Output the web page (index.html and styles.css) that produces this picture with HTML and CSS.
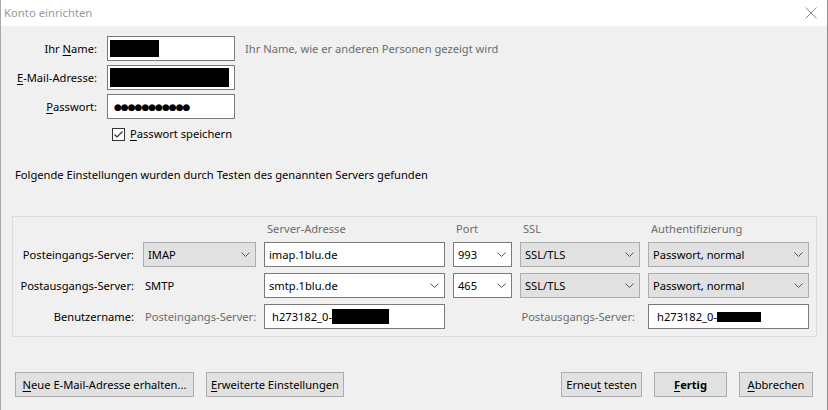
FILE: index.html
```html
<!DOCTYPE html>
<html lang="de">
<head>
    <meta charset="utf-8">
    <title>Konto einrichten</title>
    <link rel="stylesheet" href="styles.css">
</head>
<body>

    <div class="dialog">

        <div class="titlebar">
            <span class="titlebar__title">Konto einrichten</span>
            <svg class="titlebar__close" width="12" height="12" viewBox="0 0 12 12">
                <path d="M0.5 0.5 L11.5 11.5 M11.5 0.5 L0.5 11.5" stroke="#8a8a8a" stroke-width="1" fill="none"/>
            </svg>
        </div>

        <div class="account">
            <span class="account__label">Ihr <u>N</u>ame:</span>
            <div class="field field--account"><span class="redacted redacted--name"></span></div>
            <span class="account__hint">Ihr Name, wie er anderen Personen gezeigt wird</span>

            <span class="account__label"><u>E</u>-Mail-Adresse:</span>
            <div class="field field--account"><span class="redacted redacted--mail"></span></div>
            <span></span>

            <span class="account__label"><u>P</u>asswort:</span>
            <div class="field field--account"><span class="account__dots">●●●●●●●●●●●</span></div>
            <span></span>

            <span></span>
            <label class="check">
                <svg class="check__box" width="13" height="13" viewBox="0 0 13 13">
                    <rect x="0.5" y="0.5" width="12" height="12" fill="#fff" stroke="#333"/>
                    <path d="M2.5 6.5 L5 9 L10.5 3.5" stroke="#333" stroke-width="1.2" fill="none"/>
                </svg>
                <span><u>P</u>asswort speichern</span>
            </label>
        </div>

        <p class="notice">Folgende Einstellungen wurden durch Testen des genannten Servers gefunden</p>

        <div class="servers">
            <div class="servers__grid">
                <span></span>
                <span></span>
                <span class="servers__head">Server-Adresse</span>
                <span class="servers__head">Port</span>
                <span class="servers__head">SSL</span>
                <span class="servers__head">Authentifizierung</span>

                <span class="servers__label">Posteingangs-Server:</span>
                <div class="field field--select">IMAP<svg class="chevron" width="9" height="5" viewBox="0 0 9 5"><path d="M0.5 0.5 L4.5 4.5 L8.5 0.5" stroke="#555" fill="none"/></svg></div>
                <div class="field">imap.1blu.de</div>
                <div class="field">993<svg class="chevron" width="9" height="5" viewBox="0 0 9 5"><path d="M0.5 0.5 L4.5 4.5 L8.5 0.5" stroke="#555" fill="none"/></svg></div>
                <div class="field field--select">SSL/TLS<svg class="chevron" width="9" height="5" viewBox="0 0 9 5"><path d="M0.5 0.5 L4.5 4.5 L8.5 0.5" stroke="#555" fill="none"/></svg></div>
                <div class="field field--select">Passwort, normal<svg class="chevron" width="9" height="5" viewBox="0 0 9 5"><path d="M0.5 0.5 L4.5 4.5 L8.5 0.5" stroke="#555" fill="none"/></svg></div>

                <span class="servers__label">Postausgangs-Server:</span>
                <span class="servers__type">SMTP</span>
                <div class="field">smtp.1blu.de<svg class="chevron" width="9" height="5" viewBox="0 0 9 5"><path d="M0.5 0.5 L4.5 4.5 L8.5 0.5" stroke="#555" fill="none"/></svg></div>
                <div class="field">465<svg class="chevron" width="9" height="5" viewBox="0 0 9 5"><path d="M0.5 0.5 L4.5 4.5 L8.5 0.5" stroke="#555" fill="none"/></svg></div>
                <div class="field field--select">SSL/TLS<svg class="chevron" width="9" height="5" viewBox="0 0 9 5"><path d="M0.5 0.5 L4.5 4.5 L8.5 0.5" stroke="#555" fill="none"/></svg></div>
                <div class="field field--select">Passwort, normal<svg class="chevron" width="9" height="5" viewBox="0 0 9 5"><path d="M0.5 0.5 L4.5 4.5 L8.5 0.5" stroke="#555" fill="none"/></svg></div>

                <span class="servers__label">Benutzername:</span>
                <span class="servers__type servers__type--muted">Posteingangs-Server:</span>
                <div class="field field--user">h273182_0-<span class="redacted redacted--user"></span></div>
                <span class="servers__sublabel">Postausgangs-Server:</span>
                <div class="field field--user-out">h273182_0-<span class="redacted redacted--user-out"></span></div>
            </div>
        </div>

        <div class="actions">
            <div class="actions__group">
                <button class="button button--new"><u>N</u>eue E-Mail-Adresse erhalten...</button>
                <button class="button button--advanced"><u>E</u>rweiterte Einstellungen</button>
            </div>
            <div class="actions__group">
                <button class="button button--retest">Erneu<u>t</u> testen</button>
                <button class="button button--done"><u>F</u>ertig</button>
                <button class="button button--cancel"><u>A</u>bbrechen</button>
            </div>
        </div>

    </div>

</body>
</html>
```

FILE: styles.css
```css
* {
    box-sizing: border-box;
}

body {
    margin: 0;
    padding: 0;
    background-color: #f0f0f0;
    color: #000;
    font-family: "Noto Sans", "Open Sans", sans-serif;
    font-size: 11.15px;
    line-height: 16px;
}

u {
    text-decoration-thickness: 1px;
    text-underline-offset: 2px;
}

.dialog {
    width: 828px;
    height: 410px;
    background-color: #f0f0f0;
    border-left: 1px solid #a9a9a9;
    border-right: 1px solid #8f8f8f;
    overflow: hidden;
}

/* title bar */

.titlebar {
    height: 26px;
    background-color: #fff;
    display: flex;
    align-items: center;
    padding: 0 10px 0 3px;
}

.titlebar__title {
    color: #999;
    font-size: 11.3px;
}

.titlebar__close {
    margin-left: auto;
}

/* account block */

.account {
    display: grid;
    grid-template-columns: 96px 128px 1fr;
    grid-template-rows: 25px 25px 25px auto;
    column-gap: 10px;
    row-gap: 4px;
    padding-top: 10px;
    align-items: center;
}

.account__label {
    text-align: right;
}

.account__hint {
    color: #6d6d6d;
}

.account__dots {
    font-family: "DejaVu Sans", sans-serif;
    font-size: 9px;
    letter-spacing: -1px;
    padding-left: 4px;
}

.check {
    display: flex;
    align-items: center;
    gap: 5px;
    margin: 3px 0 0 5px;
}

.check__box {
    display: block;
}

.notice {
    margin: 25px 0 0 14px;
}

/* fields */

.field {
    height: 25px;
    display: flex;
    align-items: center;
    padding: 0 4px;
    background-color: #fff;
    border: 1px solid #7a7a7a;
    white-space: nowrap;
}

.field--select {
    background-color: #e1e1e1;
    border-color: #adadad;
}

.field--account {
    padding-left: 2px;
}

.chevron {
    margin-left: auto;
    margin-right: 1px;
}

.redacted {
    display: inline-block;
    background-color: #000;
}

.redacted--name {
    width: 49px;
    height: 17px;
}

.redacted--mail {
    width: 119px;
    height: 19px;
}

.redacted--user {
    width: 57px;
    height: 15px;
}

.redacted--user-out {
    width: 44px;
    height: 10px;
}

.field--user {
    padding-left: 7px;
}

.field--user-out {
    padding-left: 8px;
}

/* server settings */

.servers {
    margin: 33px 10px 0 11px;
    border: 1px solid #dcdcdc;
    padding: 5px 0 7px;
}

.servers__grid {
    display: grid;
    grid-template-columns: 122px 113px 181px 59px 120px 161px;
    grid-template-rows: 14px 25px 25px 25px;
    column-gap: 8px;
    row-gap: 6px;
    align-items: center;
    white-space: nowrap;
}

.servers__head {
    color: #6d6d6d;
    line-height: 14px;
    padding-left: 3px;
}

.servers__label {
    text-align: right;
    padding-right: 1px;
}

.servers__type {
    padding-left: 2px;
}

.servers__type--muted,
.servers__sublabel {
    color: #6d6d6d;
}

.servers__sublabel {
    grid-column: 4 / 6;
    text-align: right;
    padding-right: 5px;
}

/* buttons */

.actions {
    display: flex;
    justify-content: space-between;
    margin-top: 35px;
    padding: 0 14px;
}

.actions__group {
    display: flex;
    gap: 12px;
}

.button {
    height: 25px;
    padding: 0;
    background-color: #e1e1e1;
    border: 1px solid #adadad;
    font-family: inherit;
    font-size: 11.15px;
    color: #000;
}

.button--new {
    width: 179px;
}

.button--advanced {
    width: 138px;
}

.button--retest {
    width: 81px;
}

.button--done {
    width: 73px;
    font-weight: bold;
}

.button--cancel {
    width: 74px;
}
```
